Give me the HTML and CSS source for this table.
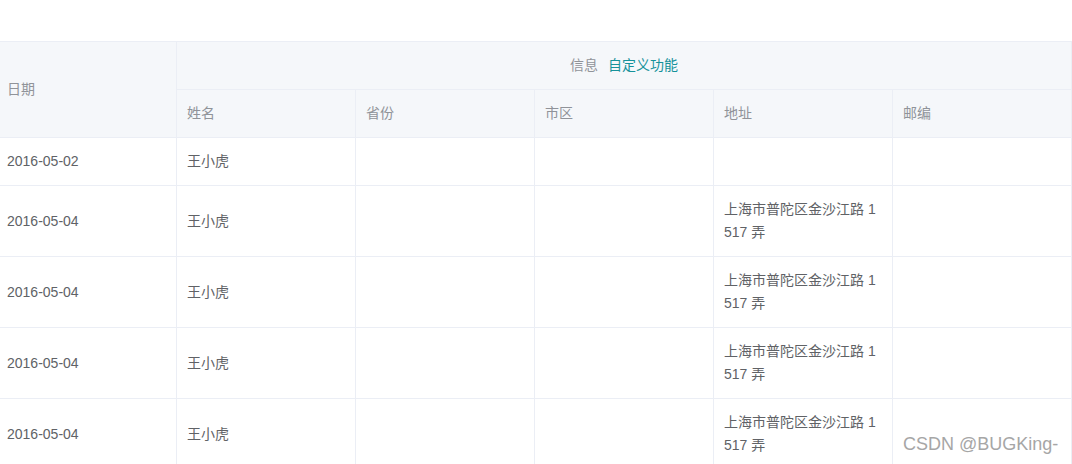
FILE: index.html
```html
<!DOCTYPE html>
<html lang="zh-CN">
<head>
<meta charset="utf-8">
<title>表格</title>
<link rel="stylesheet" href="styles.css">
</head>
<body>
<div class="page">
  <table class="grid">
    <colgroup>
      <col class="c-date">
      <col class="c-std">
      <col class="c-std">
      <col class="c-std">
      <col class="c-std">
      <col class="c-std">
    </colgroup>
    <thead>
      <tr>
        <th rowspan="2" class="first">日期</th>
        <th colspan="5" class="group">信息 <span class="link">自定义功能</span></th>
      </tr>
      <tr>
        <th>姓名</th>
        <th>省份</th>
        <th>市区</th>
        <th>地址</th>
        <th>邮编</th>
      </tr>
    </thead>
    <tbody>
      <tr>
        <td class="first">2016-05-02</td>
        <td>王小虎</td>
        <td></td>
        <td></td>
        <td></td>
        <td></td>
      </tr>
      <tr>
        <td class="first">2016-05-04</td>
        <td>王小虎</td>
        <td></td>
        <td></td>
        <td>上海市普陀区金沙江路 1517 弄</td>
        <td></td>
      </tr>
      <tr>
        <td class="first">2016-05-04</td>
        <td>王小虎</td>
        <td></td>
        <td></td>
        <td>上海市普陀区金沙江路 1517 弄</td>
        <td></td>
      </tr>
      <tr>
        <td class="first">2016-05-04</td>
        <td>王小虎</td>
        <td></td>
        <td></td>
        <td>上海市普陀区金沙江路 1517 弄</td>
        <td></td>
      </tr>
      <tr>
        <td class="first">2016-05-04</td>
        <td>王小虎</td>
        <td></td>
        <td></td>
        <td>上海市普陀区金沙江路 1517 弄</td>
        <td></td>
      </tr>
    </tbody>
  </table>
  <div class="watermark">CSDN @BUGKing-</div>
</div>
</body>
</html>
```
FILE: styles.css
```css
html, body {
  margin: 0;
  padding: 0;
  background: #ffffff;
  overflow: hidden;
}

body {
  font-family: "Liberation Sans", "Noto Sans CJK SC", sans-serif;
  font-size: 14px;
  color: #606266;
}

.page {
  position: relative;
  width: 1072px;
  height: 464px;
  padding-top: 41px;
  box-sizing: border-box;
  overflow: hidden;
}

.grid {
  width: 1072px;
  table-layout: fixed;
  border-collapse: separate;
  border-spacing: 0;
  border-top: 1px solid #ebeef5;
}

.c-date { width: 177px; }
.c-std { width: 179px; }

.grid th,
.grid td {
  padding: 12px 10px;
  line-height: 23px;
  text-align: left;
  vertical-align: middle;
  border-right: 1px solid #ebeef5;
  border-bottom: 1px solid #ebeef5;
  word-break: break-all;
  font-weight: normal;
}

.grid th {
  background: #f5f7fa;
  color: #909399;
}

.grid .first {
  padding-left: 7px;
}

.grid th.group {
  text-align: center;
}

.link {
  color: #16929a;
  margin-left: 6px;
}

.grid td {
  color: #606266;
}

.watermark {
  position: absolute;
  left: 903px;
  top: 433px;
  font-size: 18px;
  line-height: 22px;
  color: #a6a6a6;
  white-space: nowrap;
}
```
